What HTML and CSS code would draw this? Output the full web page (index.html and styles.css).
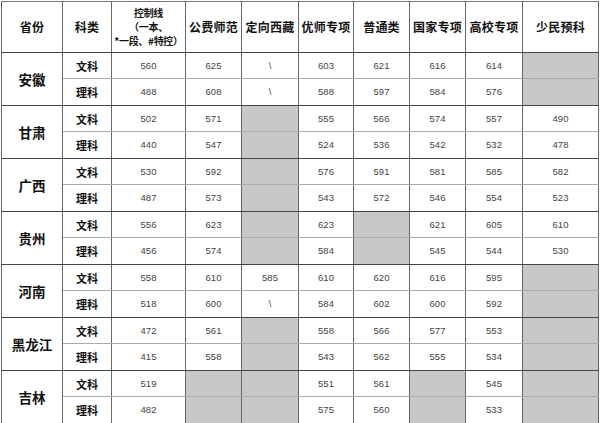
FILE: index.html
```html
<!DOCTYPE html>
<html lang="zh">
<head>
<meta charset="utf-8">
<title>控制线</title>
<link rel="stylesheet" href="styles.css">
</head>
<body>
<table class="score">
<colgroup>
<col class="c0"><col class="c1"><col class="c2"><col class="c3"><col class="c4"><col class="c5"><col class="c6"><col class="c7"><col class="c8"><col class="c9">
</colgroup>
<thead>
<tr class="head">
<th>省份</th><th>科类</th><th class="multi"><span class="ln">控制线</span><span class="ln">（一本、</span><span class="ln">*一段、#特控）</span></th><th>公费师范</th><th>定向西藏</th><th>优师专项</th><th>普通类</th><th>国家专项</th><th>高校专项</th><th>少民预科</th>
</tr>
</thead>
<tbody>
<tr class="r1"><th class="prov" rowspan="2">安徽</th><th class="kind">文科</th><td>560</td><td>625</td><td>\</td><td>603</td><td>621</td><td>616</td><td>614</td><td class="na"></td></tr>
<tr class="r2"><th class="kind">理科</th><td>488</td><td>608</td><td>\</td><td>588</td><td>597</td><td>584</td><td>576</td><td class="na"></td></tr>

<tr class="r1"><th class="prov" rowspan="2">甘肃</th><th class="kind">文科</th><td>502</td><td>571</td><td class="na"></td><td>555</td><td>566</td><td>574</td><td>557</td><td>490</td></tr>
<tr class="r2"><th class="kind">理科</th><td>440</td><td>547</td><td class="na"></td><td>524</td><td>536</td><td>542</td><td>532</td><td>478</td></tr>

<tr class="r1"><th class="prov" rowspan="2">广西</th><th class="kind">文科</th><td>530</td><td>592</td><td class="na"></td><td>576</td><td>591</td><td>581</td><td>585</td><td>582</td></tr>
<tr class="r2"><th class="kind">理科</th><td>487</td><td>573</td><td class="na"></td><td>543</td><td>572</td><td>546</td><td>554</td><td>523</td></tr>

<tr class="r1"><th class="prov" rowspan="2">贵州</th><th class="kind">文科</th><td>556</td><td>623</td><td class="na"></td><td>623</td><td class="na"></td><td>621</td><td>605</td><td>610</td></tr>
<tr class="r2"><th class="kind">理科</th><td>456</td><td>574</td><td class="na"></td><td>584</td><td class="na"></td><td>545</td><td>544</td><td>530</td></tr>

<tr class="r1"><th class="prov" rowspan="2">河南</th><th class="kind">文科</th><td>558</td><td>610</td><td>585</td><td>610</td><td>620</td><td>616</td><td>595</td><td class="na"></td></tr>
<tr class="r2"><th class="kind">理科</th><td>518</td><td>600</td><td>\</td><td>584</td><td>602</td><td>600</td><td>592</td><td class="na"></td></tr>

<tr class="r1"><th class="prov" rowspan="2">黑龙江</th><th class="kind">文科</th><td>472</td><td>561</td><td class="na"></td><td>558</td><td>566</td><td>577</td><td>553</td><td class="na"></td></tr>
<tr class="r2"><th class="kind">理科</th><td>415</td><td>558</td><td class="na"></td><td>543</td><td>562</td><td>555</td><td>534</td><td class="na"></td></tr>

<tr class="r1"><th class="prov" rowspan="2">吉林</th><th class="kind">文科</th><td>519</td><td class="na"></td><td class="na"></td><td>551</td><td>561</td><td class="na"></td><td>545</td><td class="na"></td></tr>
<tr class="r2"><th class="kind">理科</th><td>482</td><td class="na"></td><td class="na"></td><td>575</td><td>560</td><td class="na"></td><td>533</td><td class="na"></td></tr>
</tbody>
</table>
</body>
</html>
```

FILE: styles.css
```css
html, body {
  margin: 0;
  padding: 0;
  background: #ffffff;
}

.score {
  border-collapse: collapse;
  table-layout: fixed;
  width: 598px;
  margin: 1px 0 0 1px;
  font-family: "Noto Sans CJK SC", "Liberation Sans", sans-serif;
  color: #111;
}

.c0 { width: 61px; }
.c1 { width: 49px; }
.c2 { width: 74px; }
.c3 { width: 56px; }
.c4 { width: 57px; }
.c5 { width: 55px; }
.c6 { width: 56px; }
.c7 { width: 56px; }
.c8 { width: 57px; }
.c9 { width: 76px; }

.score th,
.score td {
  border-left: 1px solid #666;
  border-right: 1px solid #666;
  padding: 0;
  text-align: center;
  vertical-align: middle;
  overflow: hidden;
  white-space: nowrap;
}

.head th {
  height: 50px;
  font-size: 12px;
  line-height: 16px;
  font-weight: 700;
  border-top: 1px solid #777;
  border-bottom: 1px solid #444;
  letter-spacing: 0.2px;
}

.head th.multi {
  font-size: 10px;
  line-height: 14px;
  letter-spacing: -0.3px;
}

.multi .ln {
  display: block;
  height: 14px;
  line-height: 14px;
  overflow: hidden;
}

.r1 th, .r1 td {
  height: 25px;
  line-height: 14px;
  border-top: 1px solid #444;
  border-bottom: 1px solid #aaa;
}

.r2 th, .r2 td {
  height: 26px;
  line-height: 14px;
  border-top: 1px solid #aaa;
  border-bottom: 1px solid #444;
}

.score th.prov {
  font-size: 13.5px;
  font-weight: 700;
  border-bottom: 1px solid #444;
}

.score th.kind {
  font-size: 11px;
  font-weight: 700;
}

.score td {
  font-family: "Liberation Sans", "DejaVu Sans", sans-serif;
  font-size: 9.5px;
  color: #444;
}

.score td.na {
  background: #c8c8c8;
}
```
